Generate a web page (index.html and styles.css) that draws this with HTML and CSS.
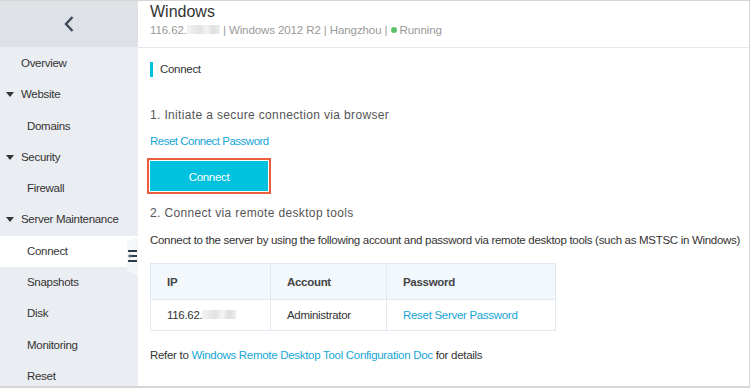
FILE: index.html
```html
<!DOCTYPE html>
<html lang="en">
<head>
    <meta charset="UTF-8">
    <title>Windows - Connect</title>
    <link rel="stylesheet" href="styles.css">
</head>
<body>
    <div class="frame">
        <aside class="sidebar">
            <div class="side-top">
                <svg width="12" height="18" viewBox="0 0 12 18"><path d="M9.5 2 L3 9 L9.5 16" fill="none" stroke="#3c4a5a" stroke-width="2.4"/></svg>
            </div>
            <ul class="menu">
                <li class="item">Overview</li>
                <li class="item group">Website</li>
                <li class="item sub">Domains</li>
                <li class="item group">Security</li>
                <li class="item sub">Firewall</li>
                <li class="item group">Server Maintenance</li>
                <li class="item sub active">Connect</li>
                <li class="item sub">Snapshots</li>
                <li class="item sub">Disk</li>
                <li class="item sub">Monitoring</li>
                <li class="item sub">Reset</li>
            </ul>
            <div class="collapse-tab">
                <svg width="9" height="12" viewBox="0 0 9 12"><rect x="0" y="0" width="9" height="2" fill="#2f3c4c"/><rect x="3" y="5" width="6" height="2" fill="#2f3c4c"/><path d="M0 6 L2.5 4 L2.5 8 Z" fill="#2f3c4c"/><rect x="0" y="10" width="9" height="2" fill="#2f3c4c"/></svg>
            </div>
        </aside>

        <main class="main">
            <header class="page-head">
                <h1 class="title">Windows</h1>
                <div class="meta">116.62.<span class="blur"></span> | Windows 2012 R2 | Hangzhou | <span class="dot"></span> Running</div>
            </header>

            <section class="content">
                <h2 class="section-title">Connect</h2>

                <p class="step">1. Initiate a secure connection via browser</p>
                <a class="link reset-link">Reset Connect Password</a>
                <div class="btn-wrap">
                    <button class="btn-connect">Connect</button>
                </div>

                <p class="step">2. Connect via remote desktop tools</p>
                <p class="desc">Connect to the server by using the following account and password via remote desktop tools (such as MSTSC in Windows)</p>

                <table class="creds">
                    <thead>
                        <tr><th class="c-ip">IP</th><th class="c-acc">Account</th><th class="c-pw">Password</th></tr>
                    </thead>
                    <tbody>
                        <tr><td>116.62.<span class="blur small"></span></td><td>Administrator</td><td><a class="link">Reset Server Password</a></td></tr>
                    </tbody>
                </table>

                <p class="refer">Refer to <a class="link">Windows Remote Desktop Tool Configuration Doc</a> for details</p>
            </section>
        </main>
    </div>
</body>
</html>
```

FILE: styles.css
```css
:root {
    --side-bg: #eaedf1;
    --side-top: #dee2e7;
    --text: #333;
    --muted: #999;
    --link: #16a6d6;
    --cyan: #00c1de;
    --line: #e3e9f0;
}

* { box-sizing: border-box; margin: 0; padding: 0; }

body {
    font-family: 'Liberation Sans', Arial, sans-serif;
    font-size: 11.5px;
    letter-spacing: -0.3px;
    color: var(--text);
    background: #fff;
}

.frame {
    width: 750px;
    height: 388px;
    display: flex;
    border-top: 1px solid #d6d6d6;
    border-right: 1px solid #d6d6d6;
    border-bottom: 2px solid #d6d6d6;
    overflow: hidden;
}

/* sidebar */
.sidebar {
    width: 138px;
    flex-shrink: 0;
    background: var(--side-bg);
    position: relative;
}

.side-top {
    height: 46px;
    background: var(--side-top);
    display: flex;
    align-items: center;
    justify-content: center;
}

.menu {
    list-style: none;
    padding-top: 1px;
}

.item {
    height: 31.3px;
    line-height: 31.3px;
    padding-left: 21px;
    white-space: nowrap;
    position: relative;
}

.item.group::before {
    content: '';
    position: absolute;
    left: 6px;
    top: 13px;
    border-left: 4px solid transparent;
    border-right: 4px solid transparent;
    border-top: 5px solid #333;
}

.item.sub { padding-left: 27px; }

.item.active { background: #fff; }

.collapse-tab {
    position: absolute;
    right: 0;
    top: 236px;
    width: 11px;
    height: 38px;
    background: #f4f6f8;
    clip-path: polygon(100% 0, 100% 100%, 0 88%, 0 12%);
    display: flex;
    align-items: center;
    justify-content: flex-end;
    padding-right: 1px;
}

/* main */
.main {
    flex: 1;
    display: flex;
    flex-direction: column;
}

.page-head {
    height: 47px;
    padding: 0 12px;
    border-bottom: 1px solid var(--line);
}

.title {
    font-size: 16px;
    font-weight: normal;
    line-height: 22px;
    letter-spacing: 0;
}

.meta {
    color: var(--muted);
    line-height: 15px;
    letter-spacing: -0.1px;
    white-space: pre;
}

.blur {
    display: inline-block;
    vertical-align: middle;
    width: 33px;
    height: 9px;
    margin-top: -2px;
    background: linear-gradient(90deg, #f3f3f3, #e2e2e2 40%, #f4f4f4 60%, #dedede 80%, #efefef);
}

.blur.small { width: 34px; }

.dot {
    width: 6px;
    height: 6px;
    border-radius: 50%;
    background: #5cc26b;
    display: inline-block;
    vertical-align: middle;
    margin-top: -2px;
}

.content {
    padding: 14px 12px 0;
}

.section-title {
    font-size: 11.5px;
    font-weight: normal;
    border-left: 3px solid var(--cyan);
    padding-left: 7px;
    line-height: 15px;
}

.step {
    margin-top: 30px;
    font-size: 12px;
    color: #555;
    letter-spacing: 0.35px;
    line-height: 16px;
}

.link {
    color: var(--link);
    cursor: pointer;
}

.reset-link {
    display: block;
    margin-top: 10px;
    line-height: 16px;
    letter-spacing: -0.5px;
}

.btn-wrap {
    margin: 9px 0 0 -3px;
    width: 124px;
    height: 36px;
    border: 2px solid #ec5f3d;
    padding: 1px;
}

.btn-connect {
    width: 100%;
    height: 100%;
    border: none;
    background: var(--cyan);
    color: #fff;
    font-family: inherit;
    font-size: 11.5px;
    letter-spacing: -0.3px;
    padding-top: 1px;
}

.btn-wrap + .step { margin-top: 11px; }

.desc {
    margin-top: 11px;
    line-height: 16px;
    white-space: nowrap;
}

.creds {
    margin-top: 15px;
    border-collapse: collapse;
    width: 406px;
}

.creds th, .creds td {
    border: 1px solid #e1eaf3;
    text-align: left;
    padding-left: 16px;
    font-size: 11.5px;
}

.creds th {
    height: 36px;
    background: #f3f8fd;
    font-weight: bold;
    color: #444;
}

.creds td { height: 31px; }

.c-ip { width: 120px; }
.c-acc { width: 116px; }

.refer {
    margin-top: 16px;
    line-height: 16px;
}
```
